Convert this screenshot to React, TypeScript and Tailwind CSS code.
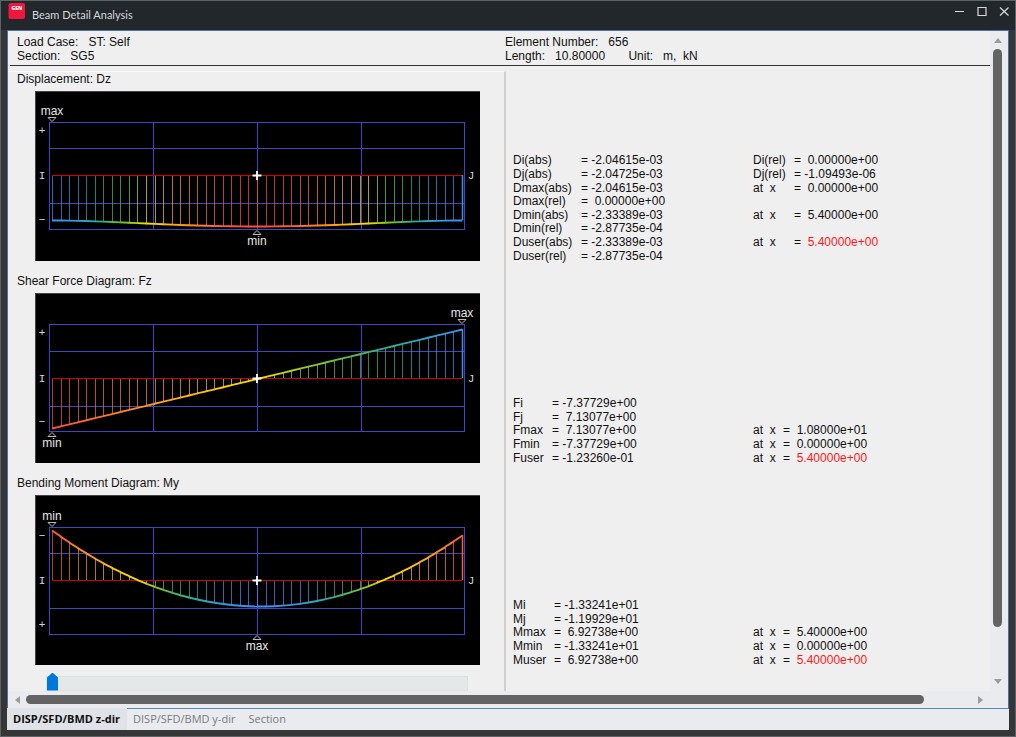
import React, { useState } from 'react';

interface Marker {
  text: string;
  at: number;
  side: 'above' | 'below';
}

interface Diagram {
  title: string;
  rows: number[];
  topSign: string;
  bottomSign: string;
  markers: Marker[];
  // vertical distance from the axis, positive is downwards
  offset: (u: number) => number;
  // position on the colour ramp, 0 is blue and 1 is red
  level: (u: number) => number;
}

interface ResultRow {
  label: string;
  value: string;
  sideLabel?: string;
  sideValue?: string;
  user?: boolean;
}

const SEGMENTS = 48;
const START_X = 17;
const END_X = 427;
const COLUMNS = [14, 118, 222, 326, 429];

const RAMP: [number, number[]][] = [
  [0, [62, 142, 244]],
  [0.08, [48, 160, 208]],
  [0.17, [46, 176, 140]],
  [0.28, [92, 188, 72]],
  [0.4, [160, 204, 28]],
  [0.5, [246, 226, 0]],
  [0.65, [255, 188, 12]],
  [0.82, [250, 134, 40]],
  [1, [255, 76, 66]],
];

const rampColor = (level: number) => {
  const t = Math.min(1, Math.max(0, level));
  const i = Math.max(1, RAMP.findIndex(([stop]) => stop >= t));
  const [a, from] = RAMP[i - 1];
  const [b, to] = RAMP[i];
  const k = (t - a) / (b - a);
  return `rgb(${from.map((c, n) => Math.round(c + (to[n] - c) * k)).join(',')})`;
};

const deflection = (u: number) => 16 * u * u * (1 - u) * (1 - u);
const moment = (u: number) => -13.32 + 79.67 * u - 78.34 * u * u;

const diagrams: Diagram[] = [
  {
    title: 'Displacement: Dz',
    rows: [31, 57, 84, 112, 138],
    topSign: '+',
    bottomSign: '−',
    markers: [
      { text: 'max', at: 0, side: 'above' },
      { text: 'min', at: 0.5, side: 'below' },
    ],
    offset: (u) => 45 + 6 * deflection(u),
    level: deflection,
  },
  {
    title: 'Shear Force Diagram: Fz',
    rows: [31, 58, 85, 113, 138],
    topSign: '+',
    bottomSign: '−',
    markers: [
      { text: 'min', at: 0, side: 'below' },
      { text: 'max', at: 1, side: 'above' },
    ],
    offset: (u) => 50 - 99 * u,
    level: (u) => 1 - u,
  },
  {
    title: 'Bending Moment Diagram: My',
    rows: [32, 58, 85, 113, 139],
    topSign: '−',
    bottomSign: '+',
    markers: [
      { text: 'min', at: 0, side: 'above' },
      { text: 'max', at: 0.5, side: 'below' },
    ],
    offset: (u) => moment(u) * 3.75,
    level: (u) => {
      const m = moment(u);
      return m > 0 ? 0.5 - m / 13.86 : 0.5 - m / 26.64;
    },
  },
];

const displacementRows: ResultRow[] = [
  { label: 'Di(abs)', value: '= -2.04615e-03', sideLabel: 'Di(rel)', sideValue: '=  0.00000e+00' },
  { label: 'Dj(abs)', value: '= -2.04725e-03', sideLabel: 'Dj(rel)', sideValue: '= -1.09493e-06' },
  { label: 'Dmax(abs)', value: '= -2.04615e-03', sideLabel: 'at  x', sideValue: '=  0.00000e+00' },
  { label: 'Dmax(rel)', value: '=  0.00000e+00' },
  { label: 'Dmin(abs)', value: '= -2.33389e-03', sideLabel: 'at  x', sideValue: '=  5.40000e+00' },
  { label: 'Dmin(rel)', value: '= -2.87735e-04' },
  { label: 'Duser(abs)', value: '= -2.33389e-03', sideLabel: 'at  x', sideValue: '=  5.40000e+00', user: true },
  { label: 'Duser(rel)', value: '= -2.87735e-04' },
];

const shearRows: ResultRow[] = [
  { label: 'Fi', value: '= -7.37729e+00' },
  { label: 'Fj', value: '=  7.13077e+00' },
  { label: 'Fmax', value: '=  7.13077e+00', sideLabel: 'at  x', sideValue: '=  1.08000e+01' },
  { label: 'Fmin', value: '= -7.37729e+00', sideLabel: 'at  x', sideValue: '=  0.00000e+00' },
  { label: 'Fuser', value: '= -1.23260e-01', sideLabel: 'at  x', sideValue: '=  5.40000e+00', user: true },
];

const momentRows: ResultRow[] = [
  { label: 'Mi', value: '= -1.33241e+01' },
  { label: 'Mj', value: '= -1.19929e+01' },
  { label: 'Mmax', value: '=  6.92738e+00', sideLabel: 'at  x', sideValue: '=  5.40000e+00' },
  { label: 'Mmin', value: '= -1.33241e+01', sideLabel: 'at  x', sideValue: '=  0.00000e+00' },
  { label: 'Muser', value: '=  6.92738e+00', sideLabel: 'at  x', sideValue: '=  5.40000e+00', user: true },
];

const tabs = ['DISP/SFD/BMD z-dir', 'DISP/SFD/BMD y-dir', 'Section'];

function DiagramChart({ diagram }: Readonly<{ diagram: Diagram }>) {
  const { rows, offset, level } = diagram;
  const top = rows[0];
  const axis = rows[2];
  const bottom = rows[4];
  const xAt = (u: number) => START_X + (END_X - START_X) * u;
  const steps = Array.from({ length: SEGMENTS + 1 }, (_, i) => i / SEGMENTS);

  return (
    <figure>
      <figcaption className="pl-[9px] text-xs leading-4">{diagram.title}</figcaption>
      <svg
        width="445"
        height="170"
        viewBox="0 0 445 170"
        role="img"
        aria-label={diagram.title}
        className="mt-1 ml-[27px] block bg-black"
      >
        <path d="M0 .5H445M.5 0V170" stroke="#444" fill="none" />
        <g fill="#4444c0" shapeRendering="crispEdges">
          {rows.filter((y) => y !== axis).map((y) => (
            <rect key={y} x={COLUMNS[0]} y={y} width={COLUMNS[4] - COLUMNS[0] + 1} height={1} />
          ))}
          {COLUMNS.map((x) => (
            <rect key={x} x={x} y={top} width={1} height={bottom - top} />
          ))}
        </g>

        <g shapeRendering="crispEdges">
          {steps.map((u) => {
            const end = axis + Math.round(offset(u));
            return (
              <rect
                key={u}
                x={Math.round(xAt(u))}
                y={Math.min(axis, end)}
                width={1}
                height={Math.abs(end - axis)}
                fill={rampColor(level(u))}
                fillOpacity={0.72}
              />
            );
          })}
          <rect x={START_X} y={axis} width={END_X - START_X} height={1} fill="#d00000" />
        </g>
        {steps.slice(1).map((u, i) => (
          <line
            key={u}
            x1={xAt(steps[i])}
            x2={xAt(u) + 0.5}
            y1={axis + 0.5 + offset(steps[i])}
            y2={axis + 0.5 + offset(u)}
            stroke={rampColor((level(steps[i]) + level(u)) / 2)}
            strokeWidth={1.9}
          />
        ))}
        <line
          x1={END_X + 0.5}
          x2={END_X + 0.5}
          y1={axis}
          y2={axis + offset(1)}
          stroke={rampColor(level(1))}
          strokeWidth={1.5}
        />
        <path d={`M217.5 ${axis + 0.5}h9M222 ${axis - 4}v9`} stroke="#fff" strokeWidth="1.8" />

        <g fill="#d8d8d8" fontFamily="Liberation Mono, monospace" fontSize="11" textAnchor="middle">
          <text x="7" y={top + 12}>{diagram.topSign}</text>
          <text x="7" y={axis + 4}>I</text>
          <text x="7" y={bottom - 6}>{diagram.bottomSign}</text>
          <text x="436" y={axis + 4}>J</text>
        </g>
        {diagram.markers.map(({ text, at, side }) => {
          const x = Math.round(xAt(at));
          const arrow = side === 'above' ? `M${x - 4} ${top - 4.5}h8l-4 4z` : `M${x - 4} ${bottom + 5.5}h8l-4 -4z`;
          return (
            <g key={text}>
              <path d={arrow} fill="none" stroke="#bbb" />
              <text
                x={x}
                y={side === 'above' ? top - 7 : bottom + 16}
                fill="#e6e6e6"
                fontFamily="Liberation Sans, sans-serif"
                fontSize="12"
                textAnchor="middle"
              >
                {text}
              </text>
            </g>
          );
        })}
      </svg>
    </figure>
  );
}

interface ResultTableProps {
  name: string;
  rows: ResultRow[];
  heightClass: string;
  labelClass: string;
  valueClass: string;
  sideClass: string;
}

function ResultTable({ name, rows, heightClass, labelClass, valueClass, sideClass }: Readonly<ResultTableProps>) {
  return (
    <table aria-label={name} className={`w-full table-fixed whitespace-pre text-left text-xs leading-[13px] ${heightClass}`}>
      <colgroup>
        <col className={labelClass} />
        <col className={valueClass} />
        <col className={sideClass} />
        <col />
      </colgroup>
      <tbody>
        {rows.map((row) => (
          <tr key={row.label}>
            <th scope="row" className="p-0 font-normal">{row.label}</th>
            <td className="p-0">{row.value}</td>
            <td className="p-0">{row.sideLabel}</td>
            <td className="p-0">
              {row.user ? (
                <>
                  {'=  '}
                  <span className="text-[#ff1818]">{row.sideValue?.slice(3)}</span>
                </>
              ) : (
                row.sideValue
              )}
            </td>
          </tr>
        ))}
      </tbody>
    </table>
  );
}

function TitleBar() {
  return (
    <header className="flex h-[29px] items-start bg-[#22272b] pl-[7px]">
      <svg width="18" height="18" viewBox="0 0 18 18" className="mt-px" aria-hidden="true">
        <path d="M2.5 1H15.5Q17 1 17 2.5V15Q17 17 15 17H2Q.5 17 .5 15.5V3Q.5 1 2.5 1Z" fill="#f0163c" />
        <text x="8.8" y="8" fill="#fff" fontFamily="Open Sans, sans-serif" fontSize="5" fontWeight="800" textAnchor="middle">
          GEN
        </text>
      </svg>
      <h1 className="mt-1.5 ml-1.5 flex-1 font-[Lato,sans-serif] text-[11px] leading-4 text-[#d6d8da]">
        Beam Detail Analysis
      </h1>
      <div className="mt-1 flex gap-2.5 pr-[5px] text-[#d8dadb]">
        <button type="button" aria-label="Minimize">
          <svg width="12" height="12" viewBox="0 0 12 12" fill="none" stroke="currentColor">
            <path d="M1 6.5H10" />
          </svg>
        </button>
        <button type="button" aria-label="Maximize">
          <svg width="12" height="12" viewBox="0 0 12 12" fill="none" stroke="currentColor">
            <path d="M2 2.5H10V10.5H2Z" strokeWidth="1.2" />
          </svg>
        </button>
        <button type="button" aria-label="Close">
          <svg width="12" height="12" viewBox="0 0 12 12" fill="none" stroke="currentColor">
            <path d="M2 2.5L10.5 10.5M10.5 2.5L2 10.5" strokeWidth="1.2" />
          </svg>
        </button>
      </div>
    </header>
  );
}

function Arrow({ points }: Readonly<{ points: string }>) {
  return (
    <svg width="8" height="8" viewBox="0 0 8 8" className="shrink-0" aria-hidden="true">
      <polygon points={points} fill="#9c9c9c" />
    </svg>
  );
}

export default function App() {
  const [activeTab, setActiveTab] = useState(tabs[0]);
  const [position, setPosition] = useState(0);

  return (
    <div className="flex min-h-screen flex-col border border-[#5c6366] bg-[#363636] font-['Liberation_Sans',Arial,sans-serif] text-[#111]">
      <TitleBar />

      <div className="mx-[6px] mb-[6px] flex flex-1 flex-col">
        <main className="flex flex-1 flex-col border border-b-0 border-[#4a6fae] bg-[#e9ebef]">
          <div className="flex flex-1">
            <div className="flex min-w-0 flex-1 flex-col bg-[#efefef]">
              <div className="ml-0.5 grid grid-cols-[488px_1fr] border-b border-[#333] pt-1 pb-[2px] pl-[7px] text-xs leading-[14px] whitespace-pre">
                <span>{'Load Case:   ST: Self'}</span>
                <span>{'Element Number:   656'}</span>
                <span>{'Section:   SG5'}</span>
                <span>{'Length:   10.80000       Unit:   m,  kN'}</span>
              </div>

              <div className="flex flex-1">
                <div className="mt-[5px] flex w-[498px] shrink-0 flex-col border-t border-r-2 border-t-[#fafafa] border-r-[#cfcfcf]">
                  <div className="-mt-px flex flex-col gap-3">
                    {diagrams.map((diagram) => (
                      <DiagramChart key={diagram.title} diagram={diagram} />
                    ))}
                  </div>
                  <input
                    type="range"
                    aria-label="Position along the beam"
                    min={0}
                    max={SEGMENTS}
                    value={position}
                    onChange={(e) => setPosition(Number(e.target.value))}
                    className="mt-[7px] ml-[38px] h-[18px] w-[422px] appearance-none bg-transparent [&::-webkit-slider-runnable-track]:h-[15px] [&::-webkit-slider-runnable-track]:translate-y-[2px] [&::-webkit-slider-runnable-track]:border [&::-webkit-slider-runnable-track]:border-[#dedfdf] [&::-webkit-slider-runnable-track]:bg-[#e5e8e9] [&::-webkit-slider-thumb]:-mt-1 [&::-webkit-slider-thumb]:h-[18px] [&::-webkit-slider-thumb]:w-[11px] [&::-webkit-slider-thumb]:appearance-none [&::-webkit-slider-thumb]:bg-[#0078d7] [&::-webkit-slider-thumb]:[clip-path:polygon(50%_0,100%_28%,100%_100%,0_100%,0_28%)]"
                  />
                </div>

                <div className="flex min-w-0 flex-1 flex-col gap-[134px] pt-[88px] pl-[7px]">
                  <ResultTable
                    name="Displacement results"
                    rows={displacementRows}
                    heightClass="h-[109px]"
                    labelClass="w-[68px]"
                    valueClass="w-[172px]"
                    sideClass="w-[41px]"
                  />
                  <ResultTable
                    name="Shear force results"
                    rows={shearRows}
                    heightClass="h-[68px]"
                    labelClass="w-[39px]"
                    valueClass="w-[201px]"
                    sideClass="w-[30px]"
                  />
                  <ResultTable
                    name="Bending moment results"
                    rows={momentRows}
                    heightClass="h-[68px]"
                    labelClass="w-[41px]"
                    valueClass="w-[199px]"
                    sideClass="w-[30px]"
                  />
                </div>
              </div>
            </div>

            {/* Vertical scrollbar */}
            <div className="flex w-[18px] flex-col items-center gap-1 py-1.5 pr-[3px]">
              <Arrow points="4,1 8,6 0,6" />
              <div className="flex w-[9px] flex-1 flex-col">
                <div className="flex-[581] rounded-full bg-[#636363]" />
                <div className="flex-[46]" />
              </div>
              <Arrow points="0,2 8,2 4,7" />
            </div>
          </div>

          {/* Horizontal scrollbar */}
          <div className="flex h-[17px] items-center gap-1 pr-6 pl-1.5">
            <Arrow points="6,0 6,8 1,4" />
            <div className="flex h-[9px] flex-1">
              <div className="flex-[899] rounded-full bg-[#636363]" />
              <div className="flex-[48]" />
            </div>
            <Arrow points="2,0 2,8 7,4" />
          </div>
        </main>

        <nav role="tablist" className="flex h-[22px] bg-[#e9ebef] font-['Open_Sans',sans-serif] text-[11px] leading-4">
          {tabs.map((tab) => (
            <button
              key={tab}
              type="button"
              role="tab"
              aria-selected={tab === activeTab}
              onClick={() => setActiveTab(tab)}
              className={`border-t pr-[7px] pb-0.5 pl-1.5 whitespace-nowrap ${
                tab === activeTab
                  ? 'border-[#dfe2e7] bg-[#dfe2e7] font-bold text-[#111]'
                  : 'border-[#5f86bb] text-[#777b80]'
              }`}
            >
              {tab}
            </button>
          ))}
          <div className="flex-1 border-t border-[#5f86bb]" />
        </nav>
      </div>
    </div>
  );
}
